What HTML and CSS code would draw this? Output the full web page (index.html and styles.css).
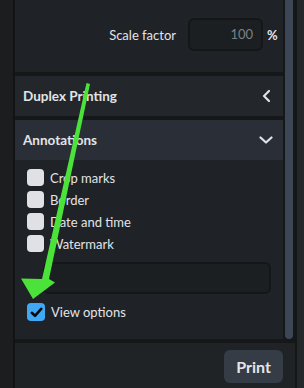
FILE: index.html
```html
<!DOCTYPE html>
<html lang="en">
<head>
    <meta charset="UTF-8">
    <title>Print Options</title>
    <link rel="stylesheet" href="styles.css">
</head>
<body>
    <div class="window">
        <div class="side"></div>

        <div class="main">
            <div class="scroller">
                <div class="panel">
                    <div class="section scale-section">
                        <div class="scale-row">
                            <span class="scale-label">Scale factor</span>
                            <div class="field scale-field">100</div>
                            <span class="unit">%</span>
                        </div>
                    </div>

                    <div class="header">
                        <span>Duplex Printing</span>
                        <svg class="chevron" width="12" height="14" viewBox="0 0 12 14">
                            <path d="M8 2 L3 7 L8 12" fill="none" stroke="#dfe2e6" stroke-width="2.2" stroke-linecap="round" stroke-linejoin="round"/>
                        </svg>
                    </div>

                    <div class="group">
                        <div class="header header-open">
                            <span>Annotations</span>
                            <svg class="chevron" width="14" height="12" viewBox="0 0 14 12">
                                <path d="M1.5 3.5 L7 8.5 L12.5 3.5" fill="none" stroke="#dfe2e6" stroke-width="2.2" stroke-linecap="round" stroke-linejoin="round"/>
                            </svg>
                        </div>

                        <div class="section annotations">
                            <label class="check-row"><span class="box"></span>Crop marks</label>
                            <label class="check-row"><span class="box"></span>Border</label>
                            <label class="check-row"><span class="box"></span>Date and time</label>
                            <label class="check-row"><span class="box"></span>Watermark</label>
                            <div class="field watermark-field"></div>
                            <label class="check-row view-row">
                                <span class="box box-on">
                                    <svg width="13" height="11" viewBox="0 0 13 11">
                                        <path d="M1.8 5.8 L5 8.8 L11.2 1.8" fill="none" stroke="#0b0c0e" stroke-width="2.6" stroke-linecap="round" stroke-linejoin="round"/>
                                    </svg>
                                </span>View options
                            </label>
                        </div>
                    </div>
                </div>

                <div class="scrollbar"><div class="thumb"></div></div>
            </div>

            <div class="footer">
                <button class="print-btn">Print</button>
            </div>
        </div>

        <div class="edge"></div>
    </div>

    <!-- annotation arrow drawn over the screenshot -->
    <svg class="arrow" width="304" height="388" viewBox="0 0 304 388">
        <polygon points="86.5,83 90,84 49,279 55,282.5 33,299 21,278.5 42,279" fill="#4be23a"/>
    </svg>
</body>
</html>
```

FILE: styles.css
```css
body {
    margin: 0;
    width: 304px;
    height: 388px;
    overflow: hidden;
    background: #1b1c1e;
    font-family: Lato, "Open Sans", sans-serif;
    color: #e2e4e7;
    position: relative;
}

.window {
    display: flex;
    height: 388px;
}

.side {
    width: 13px;
    background: #1c1d1f;
    border-right: 2px solid #121315;
}

.main {
    width: 280px;
    display: flex;
    flex-direction: column;
    background: #151719;
}

.scroller {
    display: flex;
    height: 339px;
}

.panel {
    width: 270px;
    display: flex;
    flex-direction: column;
    gap: 4px;
    background: #151719;
}

.section {
    background: #1f2226;
}

.scale-section {
    height: 72px;
    flex-shrink: 0;
}

.scale-row {
    display: flex;
    align-items: center;
    padding-top: 18px;
}

.scale-label {
    width: 161px;
    text-align: right;
    font-size: 13px;
    margin-right: 12px;
}

.field {
    box-sizing: border-box;
    background: #1c1f22;
    border: 2px solid #141618;
    border-radius: 6px;
}

.scale-field {
    width: 75px;
    height: 33px;
    padding-right: 8px;
    text-align: right;
    line-height: 29px;
    font-size: 13px;
    color: #7c8086;
}

.unit {
    margin-left: 4px;
    font-size: 13px;
    font-weight: bold;
}

.header {
    height: 40px;
    flex-shrink: 0;
    display: flex;
    align-items: center;
    justify-content: space-between;
    padding: 0 10px 0 8px;
    background: #23272b;
    font-size: 13.5px;
    font-weight: bold;
}

.header-open {
    background: #2a2f37;
}

.group {
    flex: 1;
    display: flex;
    flex-direction: column;
}

.annotations {
    flex: 1;
    display: flex;
    flex-direction: column;
    gap: 5px;
    padding: 9px 12px 0 12px;
}

.check-row {
    display: flex;
    align-items: center;
    gap: 6px;
    height: 17px;
    font-size: 13px;
}

.box {
    width: 17px;
    height: 17px;
    border-radius: 4px;
    background: #dfe1e5;
    display: flex;
    align-items: center;
    justify-content: center;
}

.box-on {
    width: 18px;
    height: 18px;
    background: #3fa9f5;
}

.watermark-field {
    height: 32px;
    margin: 5px 0 4px 16px;
}

.view-row {
    height: 18px;
}

.scrollbar {
    width: 8px;
    padding: 0 2px;
}

.thumb {
    height: 100%;
    background: #3c4755;
    border-radius: 0 0 4px 4px;
}

.footer {
    margin-top: 4px;
    flex: 1;
    background: #202326;
    display: flex;
    justify-content: flex-end;
    align-items: flex-start;
    padding: 7px 12px 0 0;
}

.print-btn {
    width: 59px;
    height: 33px;
    border: none;
    border-radius: 6px;
    background: #353c46;
    color: #e4e6e8;
    font-family: Lato, "Open Sans", sans-serif;
    font-size: 16px;
    font-weight: bold;
    padding: 0;
}

.edge {
    flex: 1;
    background: #25282b;
    border-left: 2px solid #151618;
}

.arrow {
    position: absolute;
    left: 0;
    top: 0;
}
```
